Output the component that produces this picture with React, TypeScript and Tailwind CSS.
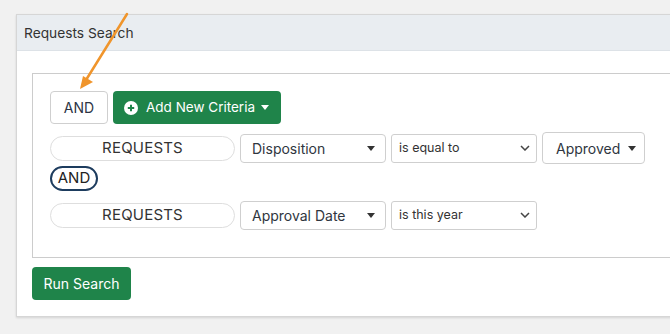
import React from "react";

function Caret({ className = "" }: { className?: string }) {
  return (
    <svg width="8" height="5" viewBox="0 0 8 5" className={className}>
      <path d="M0 0h8L4 5z" fill="currentColor" />
    </svg>
  );
}

function Chevron() {
  return (
    <svg width="10" height="6" viewBox="0 0 10 6" className="text-[#444]">
      <path d="M1 1l4 4 4-4" fill="none" stroke="currentColor" strokeWidth="1.5" />
    </svg>
  );
}

function EntityPill() {
  return (
    <div className="flex h-[25px] w-[185px] items-center justify-center rounded-full border border-[#dedede] bg-white text-[15px] tracking-[0.2px] text-[#333]">
      REQUESTS
    </div>
  );
}

function FieldSelect({ label }: { label: string }) {
  return (
    <div className="flex h-[29px] w-[146px] items-center justify-between rounded-[4px] border border-[#cfcfcf] bg-white pl-[11px] pr-[10px] text-[14px] text-[#2f3640]">
      <span>{label}</span>
      <Caret className="text-[#333]" />
    </div>
  );
}

function OpSelect({ label }: { label: string }) {
  return (
    <div className="flex h-[29px] w-[146px] items-center justify-between rounded-[3px] border border-[#cfcfcf] bg-white pl-[7px] pr-[6px] text-[12.5px] text-[#333]">
      <span>{label}</span>
      <Chevron />
    </div>
  );
}

export default function App() {
  return (
    <div
      className="relative h-[334px] w-[670px] overflow-hidden bg-[#f1f1f1] pl-[16px] pt-[14px]"
      style={{ fontFamily: "Inter, 'Noto Sans', sans-serif" }}
    >
      <div className="w-[720px] border border-[#d6d6d6] bg-white shadow-[0_1px_2px_rgba(0,0,0,0.12)]">
        <div className="flex h-[36px] items-center border-b border-[#dde2e7] bg-[#e9edf1] pl-[7px] pt-[2px] text-[13.75px] text-[#333]">
          Requests Search
        </div>
        <div className="pb-[16px] pl-[15px] pt-[22px]">
          <div className="border border-[#cccccc] pb-[27px] pl-[17px] pt-[17px]">
            <div className="flex gap-[5px]">
              <button className="h-[33px] w-[58px] rounded-[4px] border border-[#cfcfcf] bg-white text-[14px] text-[#2c3445]">
                AND
              </button>
              <button className="flex h-[33px] w-[168px] items-center rounded-[4px] bg-[#1f844a] pl-[11px] text-[13.5px] text-white">
                <svg width="14" height="14" viewBox="0 0 14 14" className="mr-[8px]">
                  <circle cx="7" cy="7" r="7" fill="white" />
                  <path d="M7 3.8v6.4M3.8 7h6.4" stroke="#1f844a" strokeWidth="2" />
                </svg>
                <span>Add New Criteria</span>
                <Caret className="ml-[6px] text-white" />
              </button>
            </div>

            <div className="mt-[8px] flex h-[32px] items-center gap-[5px]">
              <EntityPill />
              <FieldSelect label="Disposition" />
              <OpSelect label="is equal to" />
              <div className="flex h-[32px] w-[103px] items-center rounded-[4px] border border-[#cfcfcf] bg-white pl-[13px] text-[14px] text-[#2f3640]">
                <span>Approved</span>
                <Caret className="ml-[8px] text-[#333]" />
              </div>
            </div>

            <div className="mt-[2px] flex">
              <div className="flex h-[25px] w-[48px] items-center justify-center rounded-full border-2 border-[#1d3c5e] text-[15px] text-[#222]">
                AND
              </div>
            </div>

            <div className="mt-[9px] flex h-[30px] items-center gap-[5px]">
              <EntityPill />
              <FieldSelect label="Approval Date" />
              <OpSelect label="is this year" />
            </div>
          </div>

          <button className="mt-[9px] h-[33px] w-[99px] rounded-[4px] bg-[#1f844a] text-[14px] text-white">
            Run Search
          </button>
        </div>
      </div>

      <svg className="absolute left-0 top-0" width="670" height="334" viewBox="0 0 670 334">
        <path d="M127 14L86 80" stroke="#f0952c" strokeWidth="2.5" strokeLinecap="round" />
        <path d="M80 89L83 76L93 82z" fill="#f0952c" />
      </svg>
    </div>
  );
}
